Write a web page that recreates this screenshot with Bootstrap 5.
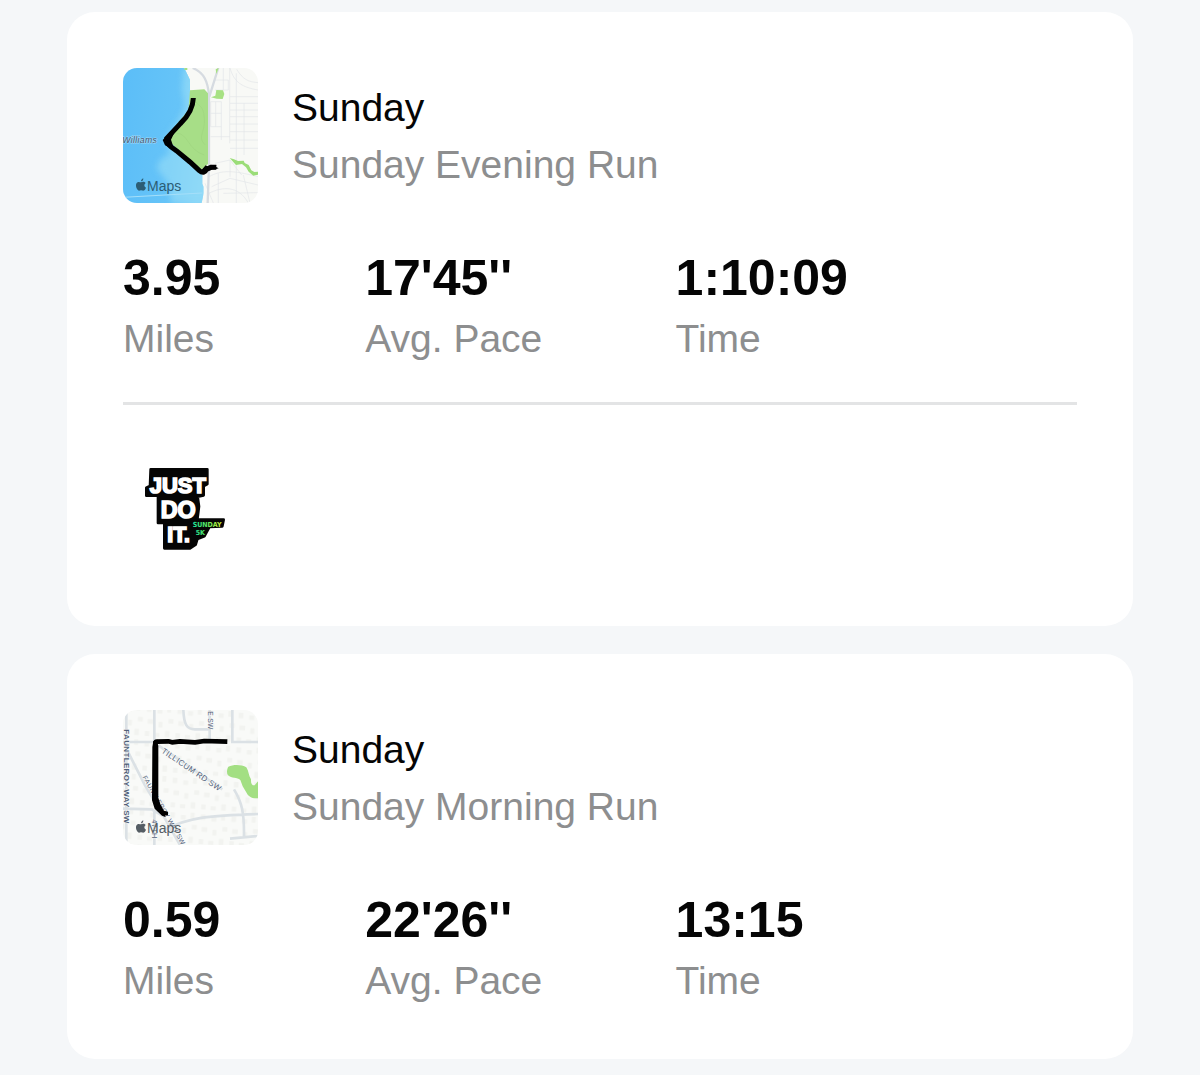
<!DOCTYPE html>
<html lang="en">
<head>
<meta charset="utf-8">
<meta name="viewport" content="width=device-width, initial-scale=1">
<title>Runs</title>
<link href="https://cdn.jsdelivr.net/npm/bootstrap@5.3.0/dist/css/bootstrap.min.css" rel="stylesheet">
<style>
  body { background: #f5f7f9; color: #050505; font-family: "Liberation Sans", Arial, sans-serif; }
  .feed { padding: 12px 67px 17px; gap: 28px; }
  .run { border: 0; border-radius: 28px; padding: 56px 56px 50px; background: #fff; color: inherit; }
  .run-head { gap: 34px; }
  .thumb { width: 135px; height: 135px; flex: none; }
  .route-map { border-radius: 14px; overflow: hidden; }
  .run-text { font-size: 39px; line-height: 57px; margin: 0; font-weight: 400; }
  .muted { color: #8d8e8f; }
  .stats { display: grid; grid-template-columns: 242fr 310fr 401fr; margin: 43px 0 0; }
  .stat-value { font-size: 50px; line-height: 64px; font-weight: 700; margin: 0; }
  .divider { border: 0; border-top: 3px solid #e3e4e5; opacity: 1; margin: 35px 0 36px; }
</style>
<script src="https://cdn.jsdelivr.net/npm/bootstrap@5.3.0/dist/js/bootstrap.bundle.min.js"></script>
</head>
<body>
<svg width="0" height="0" class="position-absolute" aria-hidden="true">
  <defs>
    <g id="apple-mark">
      <path d="M78 367c4-3 11-3 14 2-6 4-5 11 1 14-2 5-5 9-9 9-3 0-4-1-6-1s-4 1-6 1c-7-1-12-17-7-23 4-5 9-3 13-2z"/>
      <path d="M78 364c0-4 3-8 7-9 0 5-2 9-7 9z"/>
    </g>
  </defs>
</svg>
<main class="feed d-flex flex-column">
  <article class="card run">
    <header class="run-head d-flex align-items-center">
      <svg class="thumb route-map" viewBox="24 24 405 405" role="img" aria-label="Route map">
        <defs>
          <linearGradient id="sea" x1="0" y1="0.3" x2="1" y2="0.5">
            <stop offset="0" stop-color="#5cbef8"/><stop offset="0.65" stop-color="#66c4f8"/><stop offset="1" stop-color="#86d5f8"/>
          </linearGradient>
          <filter id="shoal" x="-20%" y="-20%" width="140%" height="140%"><feGaussianBlur stdDeviation="9"/></filter>
          <clipPath id="shore"><path d="M24 24H208L218 45 225 60V92L236 100V150L200 200 172 240 240 320 262 345V372L266 380V400L260 429H24Z"/></clipPath>
        </defs>
        <rect x="24" y="24" width="405" height="405" fill="#f8f9f6"/>
        <g clip-path="url(#shore)">
          <rect x="24" y="24" width="245" height="405" fill="url(#sea)"/>
          <path d="M205 24H280V429H170L160 370 125 325 135 300 165 280 150 240 190 180 212 140 200 90Z" fill="#92daf7" opacity=".7" filter="url(#shoal)"/>
        </g>
        <path d="M24 412L150 405 262 399" stroke="#a5dff9" stroke-width="3" fill="none"/>
        <g fill="none" stroke="#e3e6e8" stroke-width="2">
          <path d="M287 125V200M302 125V200M319 125V240M287 125H319M287 160H319M287 200H319M287 230H345M344 24V250M364 40V429M325 24V90M345 110H429M345 130H429M345 150H429M345 170H429M345 192H429M345 215H429M345 240H429M345 265H429M387 130V285M345 24C358 70 385 82 429 90M365 28C385 60 400 65 429 68M282 350C320 330 350 330 429 350M300 310L345 300 380 345M290 380L345 355 429 375M282 400C320 380 370 375 400 429M310 340V429M345 300V350M325 400L429 398M385 345L405 429M300 60H340V90H300M270 370L295 429"/>
        </g>
        <g fill="none" stroke="#d6dbe1" stroke-width="7">
          <path d="M233 24C268 38 278 65 282 105V315L278 429"/><path d="M310 24L283 110"/>
        </g>
        <path d="M225 91L268 88 279 100V312L258 330 158 240 165 218 220 150Z" fill="#a7de87"/>
        <path d="M233 110C250 145 265 130 268 175S245 230 271 255M185 220C220 220 218 270 268 285" stroke="#9ed47f" stroke-width="3" fill="none" opacity=".6"/>
        <path d="M304 90L324 91 328 102 323 117 305 116 288 112 301 107ZM302 28L311 24 304 42ZM208 24H217V30H209Z" fill="#a7e183"/>
        <path d="M344 294L357 298 369 303 386 302 389 309 401 315 409 331 418 336 429 335V344L415 347 401 335 393 322 381 312 363 315Z" fill="#9bdd78"/>
        <path d="M235 114C234 148 218 170 196 191L155 235C156 255 170 262 184 272L225 306 253 332C264 341 271 336 274 328L288 322 304 322" fill="none" stroke="#000" stroke-width="15"/>
        <path d="M166 216L143 240 150 256 165 264 174 257 168 239 178 218Z"/>
        <path d="M260 329L272 316 280 320 288 314 294 318 304 315 302 320 311 325 301 328 283 329 271 340Z"/>
        <text x="22" y="248" font-family="Liberation Sans, sans-serif" font-size="26" font-style="italic" letter-spacing="1" fill="#3f566e" stroke="#a9dbf8" stroke-width="3" paint-order="stroke">Williams</text>
        <g fill="#2c5d75"><use href="#apple-mark"/>
        <text x="96" y="392" font-family="Liberation Sans, sans-serif" font-size="42">Maps</text></g>
      </svg>
      <div>
        <h2 class="run-text">Sunday</h2>
        <p class="run-text muted">Sunday Evening Run</p>
      </div>
    </header>
    <div class="stats">
      <div><p class="stat-value">3.95</p><p class="run-text muted">Miles</p></div>
      <div><p class="stat-value">17'45''</p><p class="run-text muted">Avg. Pace</p></div>
      <div><p class="stat-value">1:10:09</p><p class="run-text muted">Time</p></div>
    </div>
    <hr class="divider">
    <svg class="thumb" viewBox="-36 -51 405 405" role="img" aria-label="Just Do It Sunday 5K">
      <defs>
        <linearGradient id="neon" gradientUnits="userSpaceOnUse" x1="170" y1="0" x2="262" y2="0">
          <stop offset="0" stop-color="#16e5a4"/><stop offset=".5" stop-color="#5bea62"/><stop offset="1" stop-color="#dcf32e"/>
        </linearGradient>
      </defs>
      <path d="M47 34H217V78L206 84V112L188 116 192 145 187 185H266L262 205 223 207 208 235 187 243 182 260 165 271H88V195H69V113H34V89L45 84Z" fill="#050505" stroke="#050505" stroke-width="8" stroke-linejoin="round"/>
      <g font-family="Liberation Sans, sans-serif" font-weight="700" fill="#fff" stroke="#fff" stroke-width="5">
        <text x="44" y="104" font-size="66">JUST</text>
        <text x="77" y="179" font-size="70">DO</text>
        <text x="97" y="253" font-size="64">IT.</text>
      </g>
      <g font-family="DejaVu Sans Condensed, sans-serif" font-weight="700" fill="url(#neon)">
        <text x="173" y="206" font-size="21">SUNDAY</text><text x="182" y="232" font-size="21">5K</text>
      </g>
    </svg>
  </article>

  <article class="card run">
    <header class="run-head d-flex align-items-center">
      <svg class="thumb route-map" viewBox="24 24 405 405" role="img" aria-label="Route map">
        <defs>
          <pattern id="houses" width="92" height="104" patternUnits="userSpaceOnUse" patternTransform="rotate(4)">
            <path d="M5 6h14v16H5zM37 12h15v13H37zM66 3h12v17H66zM10 44h17v14H10zM43 50h12v17H43zM72 39h15v14H72zM4 80h13v15H4zM32 84h16v12H32zM64 76h14v18H64z" fill="#f2f3f0"/>
          </pattern>
        </defs>
        <rect x="24" y="24" width="405" height="405" fill="#f9faf8"/>
        <rect x="24" y="24" width="405" height="405" fill="url(#houses)"/>
        <g fill="none" stroke="#dbe1e5" stroke-width="8">
          <path d="M34 24V429M118 24V120M24 120H118M205 24C207 68 215 82 240 82H284M284 24V118M352 24V120H429M34 140L90 250 150 350 195 429M24 320L110 322 150 345M118 330V429M145 385C220 345 290 340 429 336M357 262C380 300 388 330 387 405M345 410L429 402M130 130L322 262"/>
        </g>
        <path d="M340 194C355 187 380 187 394 196 402 208 400 220 408 232 407 245 412 251 419 250L429 238V289C410 290 401 284 395 273L383 253 376 234C366 225 350 230 339 220 334 213 336 201 340 194Z" fill="#a3df83"/>
        <g font-family="Liberation Sans, sans-serif" fill="#506078" stroke="#f9faf9" stroke-width="3" paint-order="stroke" letter-spacing="1">
          <text transform="translate(26 82) rotate(90)" font-size="24" font-weight="700">FAUNTLEROY WAY SW</text>
          <text transform="translate(138 151) rotate(34)" font-size="24">TILLICUM RD SW</text>
          <text transform="translate(82 226) rotate(60)" font-size="20">FAUNTLEROY WAY SW</text>
          <text transform="translate(279 28) rotate(90)" font-size="20">E SW</text>
          <text transform="translate(112 352) rotate(90)" font-size="22">47TH</text>
        </g>
        <path d="M121 285V123Q121 118 126 119L160 118 171 121 195 118 240 121 268 117 337 119" fill="none" stroke="#000" stroke-width="14" stroke-linejoin="round"/>
        <path d="M115 117L112 135 111 295 119 320 141 341 151 345 151 340 159 340 159 329 147 326 136 307 130 287 130 131 126 119Z"/>
        <g fill="#555d64"><use href="#apple-mark"/>
        <text x="96" y="392" font-family="Liberation Sans, sans-serif" font-size="42">Maps</text></g>
      </svg>
      <div>
        <h2 class="run-text">Sunday</h2>
        <p class="run-text muted">Sunday Morning Run</p>
      </div>
    </header>
    <div class="stats">
      <div><p class="stat-value">0.59</p><p class="run-text muted">Miles</p></div>
      <div><p class="stat-value">22'26''</p><p class="run-text muted">Avg. Pace</p></div>
      <div><p class="stat-value">13:15</p><p class="run-text muted">Time</p></div>
    </div>
  </article>
</main>
</body>
</html>
